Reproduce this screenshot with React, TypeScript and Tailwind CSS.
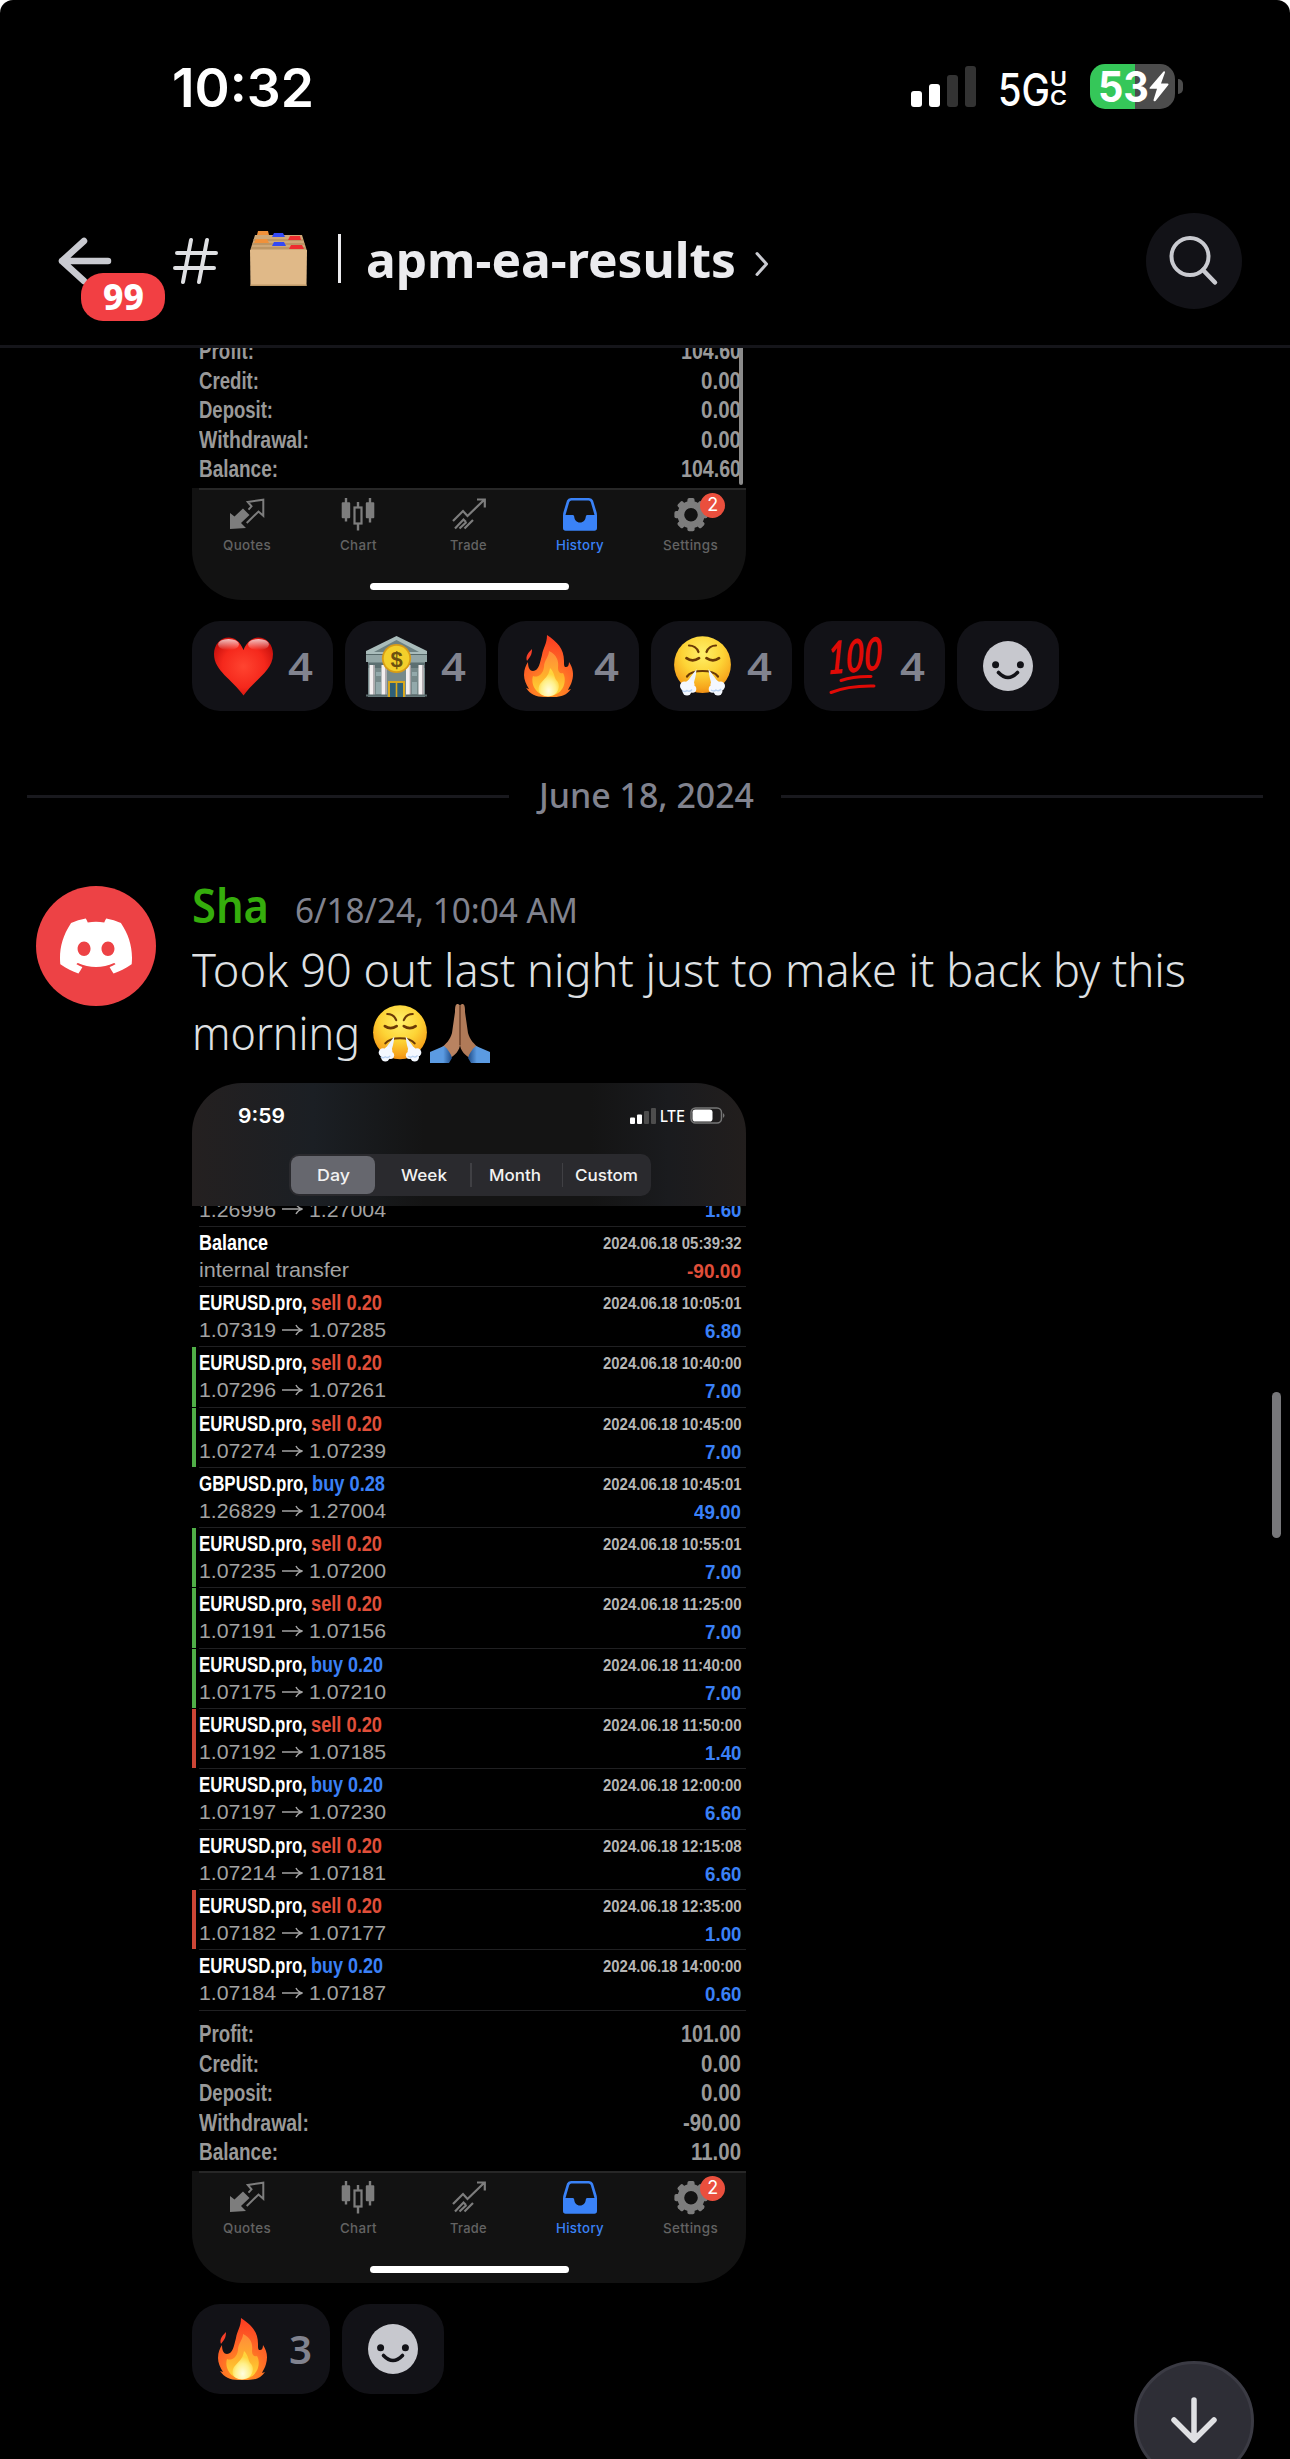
import { useLayoutEffect, useRef, useState, type ReactNode } from "react";
import { SiDiscord } from "react-icons/si";

/** One line of text condensed or stretched horizontally to an exact width. */
function Fit({ w, className = "", children }: { w: number; className?: string; children: ReactNode }) {
  const ref = useRef<HTMLSpanElement>(null);
  const [scale, setScale] = useState(1);
  useLayoutEffect(() => {
    if (ref.current) setScale(w / ref.current.getBoundingClientRect().width);
  }, []);
  return (
    <span className={`block shrink-0 whitespace-nowrap ${className}`} style={{ width: w }}>
      <span ref={ref} className="inline-block origin-left" style={{ transform: scale === 1 ? undefined : `scaleX(${scale})` }}>
        {children}
      </span>
    </span>
  );
}

/* ---------- emoji ---------- */

function SteamFace({ className }: { className: string }) {
  return (
    <svg viewBox="0 0 57 60" preserveAspectRatio="none" className={className}>
      <defs>
        <radialGradient id="face" cx="0.5" cy="0.3" r="0.72">
          <stop offset="0" stopColor="#fff06a" />
          <stop offset="0.5" stopColor="#fdd436" />
          <stop offset="0.85" stopColor="#f7a51c" />
          <stop offset="1" stopColor="#ee8a12" />
        </radialGradient>
      </defs>
      <circle cx="28.5" cy="28.7" r="28.4" fill="url(#face)" />
      <g fill="none" stroke="#6b3a06" strokeWidth="2.2" strokeLinecap="round">
        <path d="M15 9.5C19 9.5 23 12 24.5 16M42 9.5C38 9.5 34 12 32.500 16" />
        <path d="M12.500 22.200Q18.500 26.500 25 22.200M32.500 22.200Q39 26.500 45 22.200" strokeWidth="2.800" />
        <path d="M13 40.500Q17 35 28.500 35T44 40.500" />
      </g>
      <path d="M22.500 33L10 50L18 52Q22 42 22.500 33ZM34.500 33L47 50L39 52Q35 42 34.500 33Z" fill="#eef4fd" />
      <g fill="#f4f8ff">
        <circle cx="10.500" cy="50" r="4.500" /><circle cx="16" cy="48.500" r="4.500" /><circle cx="18.500" cy="53" r="3.800" />
        <circle cx="13" cy="55" r="4.500" /><circle cx="46.500" cy="50" r="4.500" /><circle cx="41" cy="48.500" r="4.500" />
        <circle cx="38.500" cy="53" r="3.800" /><circle cx="44" cy="55" r="4.500" />
      </g>
      <path d="M8 54.500q3 2 5 0q3 2 5-1M37 54q3 2 5 0q3 2 5-1" fill="none" stroke="#b9d2f3" strokeWidth="1.400" />
    </svg>
  );
}

function Heart() {
  return (
    <svg viewBox="0 0 59 59" className="h-[59px] w-[59px]">
      <defs>
        <radialGradient id="heart" cx="0.5" cy="0.5" r="0.6">
          <stop offset="0" stopColor="#ff4430" />
          <stop offset="0.6" stopColor="#f5281c" />
          <stop offset="1" stopColor="#c40e0b" />
        </radialGradient>
        <linearGradient id="shine" x1="0" y1="0" x2="0" y2="1">
          <stop offset="0" stopColor="#fff" stopOpacity="0.75" />
          <stop offset="1" stopColor="#fff" stopOpacity="0" />
        </linearGradient>
      </defs>
      <path d="M29.500 13C26 4 20 .5 15 .5C6 .5 0 8 0 17C0 34 18 42 29.500 58.500C41 42 59 34 59 17C59 8 53 .5 44 .5C39 .5 33 4 29.500 13Z" fill="url(#heart)" />
      <ellipse cx="14.500" cy="7.500" rx="10.500" ry="5.500" fill="url(#shine)" />
      <ellipse cx="44.500" cy="7.500" rx="10.500" ry="5.500" fill="url(#shine)" />
    </svg>
  );
}

function Bank() {
  return (
    <svg viewBox="0 0 61 61" className="h-[61px] w-[61px]">
      <path d="M2 22H59V61H2Z" fill="#76898a" />
      <path d="M2 27H59V32H2Z" fill="#5c6f71" />
      <path d="M30.500 0L61 15V19H0V15Z" fill="#a9bcbb" />
      <path d="M30.500 4L53 16H8Z" fill="#6d8182" />
      <path d="M0 19H61V26H0Z" fill="#93a6a6" />
      <path d="M0 18.500H61" stroke="#566869" strokeWidth="1" />
      <path d="M10 36H15V40H10ZM46 36H51V40H46ZM10 46H15V58H10ZM46 46H51V58H46Z" fill="#93a9ab" />
      <path d="M3.500 29H8.500V59H3.500ZM15.500 29H20.500V59H15.500ZM40 29H45V59H40ZM52.500 29H57.500V59H52.500Z" fill="#f3eff0" />
      <path d="M7.200 29H8.500V59H7.200ZM19.200 29H20.500V59H19.200ZM43.700 29H45V59H43.700ZM56.200 29H57.500V59H56.200Z" fill="#a59fa3" />
      <path d="M22 45H39V61H22Z" fill="#d9a81e" />
      <path d="M24 47H29.700V61H24ZM31.300 47H37V61H31.300Z" fill="#2f6078" />
      <path d="M0 59.500H21M40 59.500H61" stroke="#5b6c6e" strokeWidth="2" />
      <circle cx="30.500" cy="22.500" r="14.600" fill="#d79b17" />
      <circle cx="30.500" cy="22.500" r="12.800" fill="#f3cf2b" />
      <text x="30.500" y="30.500" textAnchor="middle" className="fill-[#6a5010] font-['Liberation_Sans'] text-[22px] font-bold">$</text>
    </svg>
  );
}

function Fire() {
  return (
    <svg viewBox="0 0 50 62" className="h-[62px] w-[50px]">
      <defs>
        <radialGradient id="fire" gradientUnits="userSpaceOnUse" cx="25" cy="52" r="52">
          <stop offset="0" stopColor="#ffa51f" />
          <stop offset="0.45" stopColor="#ff6a26" />
          <stop offset="1" stopColor="#fb3a22" />
        </radialGradient>
        <linearGradient id="flameMid" x1="0" y1="0" x2="0" y2="1">
          <stop offset="0" stopColor="#ff8b3a" />
          <stop offset="0.55" stopColor="#ffb02c" />
          <stop offset="1" stopColor="#ffd93a" />
        </linearGradient>
        <radialGradient id="flameCore" cx="0.5" cy="0.8" r="0.6">
          <stop offset="0" stopColor="#fffde0" />
          <stop offset="0.6" stopColor="#fff08a" />
          <stop offset="1" stopColor="#ffd43c" />
        </radialGradient>
      </defs>
      <path d="M23 0C33 7 40 13 40 26C40 30 40 32 42 32C44 32 45 30 45 27C49 33 50 39 48 46C47 50 45 52 44 55L47 54C43 60 37 62 30 62H20C12 62 6 59 2 53L5 54C2 49 0 45 0 40C0 34 2 30 4 27C4 33 6 36 9 36C15 36 16 27 18 20C19 13 23 9 23 0Z" fill="url(#fire)" />
      <path d="M8 14C8 20 6 22 3 26C1 21 5 17 8 14Z" fill="#f8402a" />
      <path d="M25 16C33 20 35 26 34 33C34 37 36 39 39 38C43 44 41 60 25 61C9 60 7 46 9 41C13 43 19 40 20 32C20 25 25 22 25 16Z" fill="url(#flameMid)" />
      <path d="M26 33C31 38 30 43 33 46C37 50 35 61 24 61.500C14 61 13 54 16 49C20 44 25 41 26 33Z" fill="url(#flameCore)" />
    </svg>
  );
}

function Hundred() {
  return (
    <svg viewBox="0 0 54 57" className="h-[57px] w-[54px] overflow-visible">
      <text transform="translate(-1 36.500) rotate(-5) skewX(-6) scale(0.74 1.06)" className="fill-[#e00a06] font-['Lato'] text-[43px] font-bold italic">100</text>
      <g fill="none" stroke="#e00a06" strokeWidth="3" strokeLinecap="round">
        <path d="M13 42.500Q26 38 43 38.500" />
        <path d="M3 54.500Q20 47.500 46 48" />
      </g>
    </svg>
  );
}

function Hands() {
  return (
    <svg viewBox="0 0 60 59" className="h-[59px] w-[60px]">
      <defs>
        <linearGradient id="sleeveL" x1="0" y1="0" x2="1" y2="0">
          <stop offset="0.600" stopColor="#5b9be2" />
          <stop offset="1" stopColor="#1d4a86" />
        </linearGradient>
        <linearGradient id="sleeveR" x1="1" y1="0" x2="0" y2="0">
          <stop offset="0.600" stopColor="#5b9be2" />
          <stop offset="1" stopColor="#1d4a86" />
        </linearGradient>
      </defs>
      <path d="M27 0C25 1 25 4 25 8L22 29C20 36 16 40 11 44L18 55C25 52 30 46 30 40V2C29 0 28 0 27 0Z" fill="#b98361" />
      <path d="M33 0C35 1 35 4 35 8L38 29C40 36 44 40 49 44L42 55C35 52 30 46 30 40V2C31 0 32 0 33 0Z" fill="#b07a58" />
      <path d="M30 2V41" stroke="#6d4129" strokeWidth="1.500" />
      <path d="M0 48L14 42C18 45 21 50 22 54L19 59H0Z" fill="url(#sleeveL)" />
      <path d="M60 48L46 42C42 45 39 50 38 54L41 59H60Z" fill="url(#sleeveR)" />
    </svg>
  );
}

function CardBox() {
  return (
    <svg viewBox="0 0 57 55" className="h-[55px] w-[57px]">
      <path d="M5 4H52L57 20H0Z" fill="#cfa877" />
      <path d="M3 9H53M2 13H55M1 17H56" stroke="#a98455" strokeWidth="1" />
      <path d="M8 0H18L19 4H7Z" fill="#f0913a" />
      <path d="M24 2H33L35 6H22Z" fill="#3349f5" />
      <path d="M40 5H50L51 9H38Z" fill="#ee2d2f" />
      <path d="M6 8H17L19 12H4Z" fill="#f0913a" />
      <path d="M24 11H34L36 15H22Z" fill="#3349f5" />
      <path d="M41 14H52L54 18H39Z" fill="#ee2d2f" />
      <path d="M0 19H57L56.500 55H.5Z" fill="#e0b988" />
      <path d="M.5 54.300H56.500" stroke="#bd9867" strokeWidth="1.400" />
    </svg>
  );
}

function Smiley() {
  return (
    <svg viewBox="0 0 50 50" className="h-[50px] w-[50px]">
      <circle cx="25" cy="25" r="25" fill="#c7c8ce" />
      <circle cx="12.600" cy="23.700" r="3.500" fill="#121217" />
      <circle cx="37.400" cy="23.700" r="3.500" fill="#121217" />
      <path d="M15.500 31.500Q25 41.500 34.500 31.500" fill="none" stroke="#121217" strokeWidth="3.600" strokeLinecap="round" />
    </svg>
  );
}

/* ---------- reactions ---------- */

function Reaction({ icon, count, narrow }: { icon: ReactNode; count: string; narrow?: boolean }) {
  return (
    <div className={`flex h-[90px] items-center rounded-[28px] bg-[#121217] ${narrow ? "w-[138px]" : "w-[141px]"}`}>
      <div className="ml-[19px] flex w-[64px] shrink-0 justify-center">{icon}</div>
      <Fit w={narrow ? 23 : 25} className={`${narrow ? "ml-[14px]" : "ml-[13px]"} pb-[1px] font-['Noto_Sans'] text-[40px] leading-[60px] font-semibold text-[#81838f]`}>{count}</Fit>
    </div>
  );
}

function AddReaction() {
  return (
    <div className="flex h-[90px] w-[102px] items-center justify-center rounded-[28px] bg-[#121217]">
      <Smiley />
    </div>
  );
}

/* ---------- trading app pieces ---------- */

const helv = "font-['Liberation_Sans',Arial,sans-serif]";

function Summary({ rows }: { rows: [string, number, string, number][] }) {
  return (
    <div className={`shrink-0 pt-[9.5px] pr-[5px] pb-[3.5px] pl-[7px] text-[23.5px] font-bold text-[#999999] ${helv}`}>
      {rows.map(([label, lw, value, vw]) => (
        <div key={label} className="flex h-[29.5px] justify-between leading-[29.5px]">
          <Fit w={lw}>{label}</Fit>
          <Fit w={vw}>{value}</Fit>
        </div>
      ))}
    </div>
  );
}

const gearTeeth = [0, 45, 90, 135, 180, 225, 270, 315];

const tabs: { label: string; w: number; active?: boolean; icon: ReactNode }[] = [
  {
    label: "Quotes",
    w: 48,
    icon: (
      <>
        <path d="M0 31V15L4.500 18.500L13 10.500L19.500 17L11 25L16 30Z" fill="currentColor" />
        <path d="M16.700 25L28.500 13.500L33.300 17.700V1.700L17.800 4L21.500 8.300L18.500 11.700" fill="none" stroke="currentColor" strokeWidth="2" />
      </>
    ),
  },
  {
    label: "Chart",
    w: 37,
    icon: (
      <>
        <path d="M.7 5.300Q.7 4.300 1.700 4.300H8.200Q9.200 4.300 9.200 5.300V19.300Q9.200 20.300 8.200 20.300H1.700Q.7 20.300 .7 19.300ZM24.800 5.300Q24.800 4.300 25.800 4.300H32.300Q33.300 4.300 33.300 5.300V19.300Q33.300 20.300 32.300 20.300H25.800Q24.800 20.300 24.800 19.300Z" fill="currentColor" />
        <path d="M5 0V23.500M29 0V24.500M17 4V9M17 26V32.500" stroke="currentColor" strokeWidth="2.400" />
        <rect x="13.500" y="9.500" width="7" height="16" fill="none" stroke="currentColor" strokeWidth="2.200" />
      </>
    ),
  },
  {
    label: "Trade",
    w: 37,
    icon: (
      <path d="M1 23L11 13L15.500 18L32.500 1.500M25 1.500H32.800V9.500M3 30.500L11.500 21.500L14 24M7.500 30.500L14.500 24M12.500 30.500L21 22" fill="none" stroke="currentColor" strokeWidth="2.200" />
    ),
  },
  {
    label: "History",
    w: 48,
    active: true,
    icon: (
      <path fillRule="evenodd" d="M8 0H26Q29 0 30 2.500L33.500 14Q34 15.500 34 18V30Q34 32.700 31.300 32.700H2.700Q0 32.700 0 30V18Q0 15.500 .5 14L4 2.500Q5 0 8 0ZM8.500 2.600Q6.700 2.600 6.200 4.200L2.500 17H10Q11 17 11.200 18.500C11.500 22 13.500 24.500 17 24.500S22.500 22 22.800 18.500Q23 17 24 17H31.500L27.800 4.200Q27.300 2.600 25.500 2.600Z" fill="currentColor" />
    ),
  },
  {
    label: "Settings",
    w: 55,
    icon: (
      <g transform="translate(17 16.700)">
        <circle r="10.200" fill="none" stroke="currentColor" strokeWidth="6.800" />
        {gearTeeth.map((a) => (
          <rect key={a} x="-3.600" y="-16.600" width="7.200" height="6" rx="1.800" fill="currentColor" transform={`rotate(${a})`} />
        ))}
      </g>
    ),
  },
];

function TabBar() {
  return (
    <div className="flex h-[112px] shrink-0 flex-col bg-[#121212]">
      <div className="ml-[7px] h-[1.5px] bg-[#272727]" />
      <div className="flex">
        {tabs.map((t) => (
          <div key={t.label} className={`relative flex flex-1 flex-col items-center pt-[8px] ${t.active ? "text-[#3a82f7]" : "text-[#7d7d7d]"}`}>
            <svg viewBox="0 0 34 34" className="h-[34px] w-[34px] overflow-visible">{t.icon}</svg>
            <Fit w={t.w} className={`mt-[2px] font-['Inter'] text-[13.5px] leading-[22px] font-medium tracking-wide ${t.active ? "" : "text-[#636363]"}`}>{t.label}</Fit>
            {t.label === "Settings" && (
              <div className="absolute top-[3px] left-[65px] flex h-[25px] w-[25px] items-center justify-center rounded-full bg-[#ea4f3d] font-['Inter'] text-[18px] leading-none text-white">2</div>
            )}
          </div>
        ))}
      </div>
      <div className="mt-[27px] h-[7.5px] w-[199px] self-center rounded-full bg-white" />
    </div>
  );
}

type Deal = { pair: string; pw: number; side?: string; sw?: number; from?: string; to?: string; note?: string; time: string; profit: string; vw: number; mark?: "g" | "r" };

const eur = (side: string, from: string, to: string, time: string, profit: string, mark?: "g" | "r"): Deal => ({
  pair: "EURUSD.pro,", pw: 108, side, sw: side.startsWith("sell") ? 71 : 72, from, to, time: `2024.06.18 ${time}`, profit, vw: 36.5, mark,
});

const deals: Deal[] = [
  { pair: "Balance", pw: 69, note: "internal transfer", time: "2024.06.18 05:39:32", profit: "-90.00", vw: 54 },
  eur("sell 0.20", "1.07319", "1.07285", "10:05:01", "6.80"),
  eur("sell 0.20", "1.07296", "1.07261", "10:40:00", "7.00", "g"),
  eur("sell 0.20", "1.07274", "1.07239", "10:45:00", "7.00", "g"),
  { pair: "GBPUSD.pro,", pw: 109, side: "buy 0.28", sw: 73, from: "1.26829", to: "1.27004", time: "2024.06.18 10:45:01", profit: "49.00", vw: 47 },
  eur("sell 0.20", "1.07235", "1.07200", "10:55:01", "7.00", "g"),
  eur("sell 0.20", "1.07191", "1.07156", "11:25:00", "7.00", "g"),
  eur("buy 0.20", "1.07175", "1.07210", "11:40:00", "7.00", "g"),
  eur("sell 0.20", "1.07192", "1.07185", "11:50:00", "1.40", "r"),
  eur("buy 0.20", "1.07197", "1.07230", "12:00:00", "6.60"),
  eur("sell 0.20", "1.07214", "1.07181", "12:15:08", "6.60"),
  eur("sell 0.20", "1.07182", "1.07177", "12:35:00", "1.00", "r"),
  eur("buy 0.20", "1.07184", "1.07187", "14:00:00", "0.60"),
];

function Prices({ from, to }: { from: string; to: string }) {
  return (
    <div className="flex items-center text-[21px] text-[#a3a3a3]">
      <Fit w={77}>{from}</Fit>
      <svg viewBox="0 0 21 14" className="mx-[6px] h-[14px] w-[21px]">
        <path d="M0 7H20M14 2Q16 6 20.500 7Q16 8 14 12" fill="none" stroke="currentColor" strokeWidth="1.500" />
      </svg>
      <Fit w={77}>{to}</Fit>
    </div>
  );
}

function DealRow({ d }: { d: Deal }) {
  return (
    <div className="flex h-[60.3px] shrink-0">
      <div className={`mr-[3px] mb-[1px] w-[4px] ${d.mark === "g" ? "bg-[#4fae47]" : d.mark === "r" ? "bg-[#cc4536]" : ""}`} />
      <div className="flex-1 border-b border-[#202022] pt-[3px] pr-[5px]">
        <div className="flex h-[26px] justify-between leading-[26px] font-bold">
          <div className="flex gap-[4px] text-[21.3px] text-white">
            <Fit w={d.pw}>{d.pair}</Fit>
            {d.side && d.sw && <Fit w={d.sw} className={d.side.startsWith("sell") ? "text-[#e04e39]" : "text-[#3a80f7]"}>{d.side}</Fit>}
          </div>
          <Fit w={138.5} className="text-[17px] leading-[27px] text-[#b6b6b6]">{d.time}</Fit>
        </div>
        <div className="flex h-[28px] justify-between leading-[28px]">
          {d.note ? <Fit w={150} className="text-[21px] text-[#a3a3a3]">{d.note}</Fit> : <Prices from={d.from ?? ""} to={d.to ?? ""} />}
          <Fit w={d.vw} className={`text-[21px] leading-[29.5px] font-bold ${d.profit.startsWith("-") ? "text-[#e04e39]" : "text-[#3a80f7]"}`}>{d.profit}</Fit>
        </div>
      </div>
    </div>
  );
}

function HistoryShot() {
  return (
    <div className={`mt-[20px] flex h-[1200px] w-[554px] flex-col overflow-hidden rounded-[50px] bg-black ${helv}`}>
      <div className="flex h-[123px] shrink-0 flex-col bg-[linear-gradient(90deg,#242020_0%,#1b1f24_22%,#141414_42%,#141414_72%,#1a1b1e_86%,#221e1d_100%)]">
        <div className="flex items-start pt-[15px] pr-[20px] pl-[46px] text-white">
          <Fit w={47} className="mt-[3px] font-['Inter'] text-[20.5px] leading-[30px] font-semibold">9:59</Fit>
          <svg viewBox="0 0 26 16" className="mt-[10px] ml-auto h-[16px] w-[26px]">
            <rect y="9.500" width="5" height="6.500" rx="1" fill="#fff" />
            <rect x="7" y="6.500" width="5" height="9.500" rx="1" fill="#fff" />
            <rect x="14" y="3" width="5" height="13" rx="1" fill="#4d4d4d" />
            <rect x="21" width="5" height="16" rx="1" fill="#4d4d4d" />
          </svg>
          <Fit w={25} className="ml-[4px] mt-[4px] font-['Inter'] text-[16px] leading-[28px] font-medium">LTE</Fit>
          <svg viewBox="0 0 36 17" className="mt-[9px] ml-[5px] h-[17px] w-[36px]">
            <rect x="1" y="1" width="30.500" height="15" rx="4.500" fill="none" stroke="#757575" strokeWidth="1.500" />
            <rect x="2.500" y="2.500" width="20" height="12" rx="2.800" fill="#fff" />
            <path d="M33 6Q36 8.500 33 11Z" fill="#757575" />
          </svg>
        </div>
        <div className="mt-[23px] ml-[97px] flex h-[42px] w-[362px] items-center rounded-[10px] bg-[#2a2a2e] p-[2px] font-['Inter'] text-[16.5px] font-medium text-[#f2f2f2]">
          <div className="flex h-[38px] w-[84px] items-center justify-center rounded-[8px] bg-[#66676e] pt-[1px]"><Fit w={33}>Day</Fit></div>
          <div className="flex w-[95px] justify-center pt-[1px] pl-[2px]"><Fit w={46}>Week</Fit></div>
          <div className="h-[24px] w-[1.500px] bg-[#404044]" />
          <div className="flex w-[90px] justify-center pt-[1px] pr-[3px]"><Fit w={52}>Month</Fit></div>
          <div className="h-[24px] w-[1.500px] bg-[#404044]" />
          <div className="flex flex-1 justify-center pt-[1px]"><Fit w={63}>Custom</Fit></div>
        </div>
      </div>
      <div className="ml-[7px] flex h-[20.700px] shrink-0 items-end justify-between overflow-hidden border-b border-[#202022] pr-[5px] pb-[1px] leading-[31px]">
        <Prices from="1.26996" to="1.27004" />
        <Fit w={36.500} className="text-[21px] font-bold text-[#3a80f7]">1.60</Fit>
      </div>
      {deals.map((d) => <DealRow key={d.time} d={d} />)}
      <Summary rows={[["Profit:", 55, "101.00", 60], ["Credit:", 60, "0.00", 40], ["Deposit:", 74, "0.00", 40], ["Withdrawal:", 110, "-90.00", 58], ["Balance:", 79, "11.00", 50]]} />
      <TabBar />
    </div>
  );
}

/* ---------- page chrome ---------- */

function StatusBar() {
  return (
    <div className="flex h-[213px] shrink-0 items-start pr-[107px] pl-[172px] font-['Inter'] text-white">
      <Fit w={142} className="mt-[58px] text-[53px] leading-[60px] font-semibold">10:32</Fit>
      <svg viewBox="0 0 65 41" className="mt-[66px] ml-auto h-[41px] w-[65px]">
        <rect y="25" width="11" height="16" rx="3" fill="#fff" />
        <rect x="18" y="18" width="11" height="23" rx="3" fill="#fff" />
        <rect x="36" y="9" width="11" height="32" rx="3" fill="#333" />
        <rect x="54" width="11" height="41" rx="3" fill="#333" />
      </svg>
      <Fit w={52} className="mt-[60px] ml-[22px] text-[45px] leading-[60px] font-medium">5G</Fit>
      <div className="mt-[70px] flex w-[17px] flex-col text-[20px] leading-[19px] font-semibold">
        <Fit w={17}>U</Fit>
        <Fit w={17}>C</Fit>
      </div>
      <div className="mt-[64px] ml-[23px] flex h-[45px] w-[85px] items-center rounded-[15px] bg-[linear-gradient(90deg,#35c759_53%,#4c4c4c_53%)] pl-[8px]">
        <Fit w={51} className="text-[42px] leading-[45px] font-bold">53</Fit>
        <svg viewBox="0 0 20 31" className="h-[31px] w-[20px]">
          <path d="M14.500 .5L.8 16.500Q0 17.800 1.500 17.800H8L4.500 29Q4.500 31 6.500 30L19.300 14Q20 12.500 18.500 12.500H12L16 1.500Q16 -.5 14.500 .5Z" fill="#fff" />
        </svg>
      </div>
      <div className="mt-[79px] ml-[3px] h-[15px] w-[5px] rounded-r-full bg-[#4c4c4c]" />
    </div>
  );
}

function Header() {
  return (
    <div className="flex h-[96px] shrink-0 items-center pr-[48px] pl-[56px]">
      <div className="relative flex w-[115px]">
        <svg viewBox="0 0 58 50" className="h-[50px] w-[58px]">
          <path d="M52 25H6M28 5L6 25L28 45" fill="none" stroke="#c9cad0" strokeWidth="6.500" strokeLinecap="round" strokeLinejoin="round" />
        </svg>
        <div className="absolute top-[37px] left-[25px] flex h-[48px] w-[84px] items-center justify-center rounded-[22px] bg-[#f23f43]">
          <Fit w={41} className="font-['Noto_Sans'] text-[35px] leading-[48px] font-extrabold text-white">99</Fit>
        </div>
      </div>
      <svg viewBox="0 0 48 48" className="h-[48px] w-[48px]">
        <path d="M20 3L12 45M36 3L28 45M6 16H45M4 31H43" fill="none" stroke="#dfe0e3" strokeWidth="4" strokeLinecap="round" />
      </svg>
      <div className="ml-[31px] pb-[5px]"><CardBox /></div>
      <div className="mb-[6px] ml-[31px] h-[49px] w-[2.500px] bg-[#ebebee]" />
      <Fit w={370} className="ml-[25px] pb-[4px] font-['Noto_Sans'] text-[49px] leading-[60px] font-bold text-[#ebebee]">apm-ea-results</Fit>
      <svg viewBox="0 0 14 26" className="mt-[6px] ml-[19px] h-[26px] w-[14px]">
        <path d="M2 2.500L11.500 13L2 23.500" fill="none" stroke="#c9cad0" strokeWidth="3" strokeLinecap="round" strokeLinejoin="round" />
      </svg>
      <div className="ml-auto flex h-[96px] w-[96px] items-center justify-center rounded-full bg-[#121217]">
        <svg viewBox="0 0 50 50" className="h-[50px] w-[50px]">
          <circle cx="21" cy="20.500" r="18.500" fill="none" stroke="#c9cad0" strokeWidth="4" />
          <path d="M34 34L46 46.500" stroke="#c9cad0" strokeWidth="4.500" strokeLinecap="round" />
        </svg>
      </div>
    </div>
  );
}

export default function App() {
  return (
    <div className="h-[2459px] w-[1290px] overflow-hidden bg-white">
      <div className="relative flex h-full flex-col rounded-t-[13px] bg-black">
        <StatusBar />
        <Header />
        <div className="mt-[36px] h-[3px] shrink-0 bg-[#15151a]" />

        <div className="ml-[192px] flex shrink-0 flex-col">
          <div className="relative flex h-[252px] w-[554px] flex-col justify-end overflow-hidden rounded-b-[50px]">
            <Summary rows={[["Profit:", 55, "104.60", 60], ["Credit:", 60, "0.00", 40], ["Deposit:", 74, "0.00", 40], ["Withdrawal:", 110, "0.00", 40], ["Balance:", 79, "104.60", 60]]} />
            <TabBar />
            <div className="absolute top-0 right-[3px] h-[137px] w-[4px] rounded-b-full bg-[#8a8a8a]" />
          </div>
          <div className="mt-[21px] flex gap-[12px]">
            <Reaction icon={<Heart />} count="4" />
            <Reaction icon={<Bank />} count="4" />
            <Reaction icon={<Fire />} count="4" />
            <Reaction icon={<SteamFace className="h-[60px] w-[57px]" />} count="4" />
            <Reaction icon={<Hundred />} count="4" />
            <AddReaction />
          </div>
        </div>

        <div className="mt-[60px] flex h-[50px] shrink-0 items-center px-[27px]">
          <div className="h-[3px] flex-1 bg-[#19191e]" />
          <Fit w={215} className="mr-[27px] ml-[30px] pb-[3px] font-['Noto_Sans'] text-[35px] leading-[50px] font-medium text-[#81838f]">June 18, 2024</Fit>
          <div className="h-[3px] flex-1 bg-[#19191e]" />
        </div>

        <div className="mt-[59px] flex shrink-0 pl-[36px]">
          <div className="mt-[6px] flex h-[120px] w-[120px] shrink-0 items-center justify-center rounded-full bg-[#ed4245] text-white">
            <SiDiscord size={72} />
          </div>
          <div className="ml-[36px] flex flex-col">
            <div className="flex h-[57px] items-baseline">
              <Fit w={77} className="font-['Noto_Sans'] text-[46px] leading-[50px] font-semibold text-[#35ad0c]">Sha</Fit>
              <Fit w={283} className="ml-[26px] font-['Noto_Sans'] text-[35px] leading-[40px] text-[#81838f]">6/18/24, 10:04 AM</Fit>
            </div>
            <div className="h-[126px] pt-[1px] font-['Noto_Sans'] text-[46px] leading-[63px] font-[350] text-[#dfe0e3]">
              <Fit w={994}>Took 90 out last night just to make it back by this</Fit>
              <div className="flex">
                <Fit w={168}>morning</Fit>
                <div className="ml-[13px] flex items-start gap-[3px] pt-[3px]">
                  <SteamFace className="mt-[1px] h-[57px] w-[54px]" />
                  <Hands />
                </div>
              </div>
            </div>
            <HistoryShot />
            <div className="mt-[21px] flex gap-[12px]">
              <Reaction icon={<Fire />} count="3" narrow />
              <AddReaction />
            </div>
          </div>
        </div>

        <div className="absolute top-[1392px] right-[9px] h-[146px] w-[9px] rounded-full bg-[#77777a]" />
        <div className="absolute top-[2361px] right-[36px] flex h-[120px] w-[120px] items-center justify-center rounded-full border-[3px] border-[#3b3b44] bg-[#2e2e36]">
          <svg viewBox="0 0 50 50" className="h-[50px] w-[50px]">
            <path d="M25 4V44M5 24L25 44L45 24" fill="none" stroke="#dfe0e3" strokeWidth="5.500" strokeLinecap="round" strokeLinejoin="round" />
          </svg>
        </div>
      </div>
    </div>
  );
}
